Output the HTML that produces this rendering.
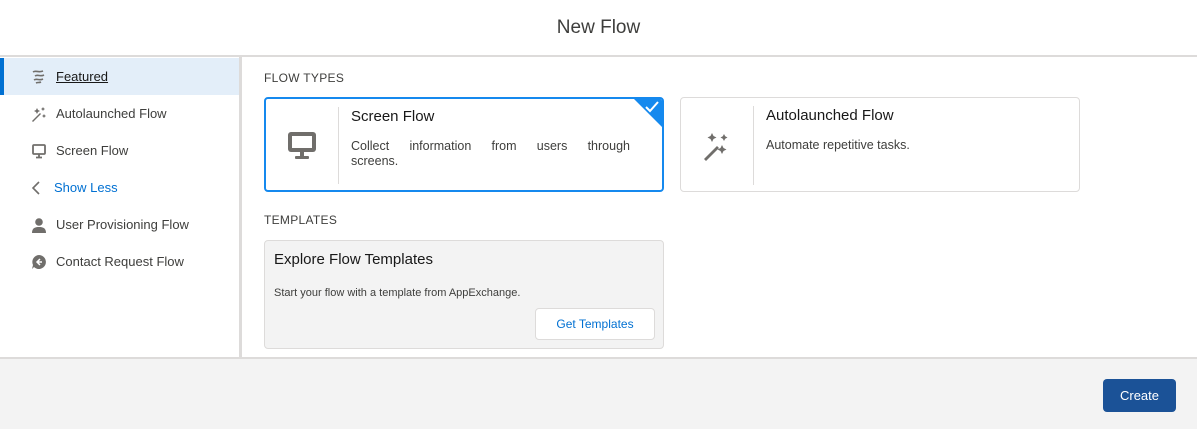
<!DOCTYPE html>
<html><head><meta charset="utf-8"><style>
*{box-sizing:border-box;margin:0;padding:0}
body{width:1197px;height:440px;background:#fff;font-family:"Liberation Sans",sans-serif;color:#181818;position:relative;overflow:hidden}
.hdr{position:absolute;left:0;top:0;width:1197px;height:57px;border-bottom:2px solid #dddbda;text-align:center;font-size:19px;line-height:56px;color:#3e3e3c}
.side{position:absolute;left:0;top:57px;width:242px;height:300px;border-right:3px solid #dddbda}
.item{position:absolute;left:0;width:239px;height:37px;font-size:13px;line-height:37px;padding-left:56px;color:#3e3e3c}
.item svg{position:absolute;left:31px;top:11px}
.sel{background:#e3eef9;border-left:4px solid #0070d2}
.sel span{text-decoration:underline;color:#181818}
.lbl{position:absolute;font-size:12px;color:#3e3e3c;letter-spacing:.3px}
.card{position:absolute;background:#fff;border:1px solid #dddbda;border-radius:4px}
.card .div{position:absolute;left:72px;top:8px;bottom:6px;width:1px;background:#dddbda}
.card h3{position:absolute;left:85px;top:9px;font-weight:normal;font-size:15px;color:#181818}
.card p{position:absolute;left:85px;top:40px;font-size:12.5px;line-height:15px;color:#3e3e3c}
.tpl{position:absolute;left:264px;top:240px;width:400px;height:109px;background:#f3f3f3;border:1px solid #dddbda;border-radius:4px}
.ftr{position:absolute;left:0;top:357px;width:1197px;height:72px;background:#f3f3f3;border-top:2px solid #dddbda}
.btn{position:absolute;border-radius:4px;font-size:13px;text-align:center}
</style></head><body>
<div class="hdr">New Flow</div>
<div class="side">
<div class="item sel" style="top:1px;padding-left:52px"><svg style="left:27px" width="16" height="16" viewBox="0 0 16 16" fill="none" stroke="#706e6b" stroke-width="1.6"><path d="M2 3c3-2 5 1 10-1M4 7c3-2 5 1 9-1M3 11c3-2 5 1 9-1M5 14c2-1 3 0 5-1"/></svg><span>Featured</span></div>
<div class="item" style="top:38px"><svg width="16" height="16" viewBox="0 0 16 16" fill="#706e6b"><path d="M1 15l8-8 1 1-8 8z"/><path d="M6 2l1 2 2 1-2 1-1 2-1-2-2-1 2-1z"/><path d="M12 1l.7 1.3L14 3l-1.3.7L12 5l-.7-1.3L10 3l1.3-.7zM13 8l.7 1.3 1.3.7-1.3.7L13 12l-.7-1.3L11 10l1.3-.7z"/></svg>Autolaunched Flow</div>
<div class="item" style="top:75px"><svg width="16" height="16" viewBox="0 0 16 16" fill="none" stroke="#706e6b" stroke-width="1.8"><rect x="2" y="2" width="12" height="9" rx="1"/><path d="M8 11v3M5 14.5h6"/></svg>Screen Flow</div>
<div class="item" style="top:112px;color:#0070d2;padding-left:54px"><svg width="16" height="16" viewBox="0 0 16 16" fill="none" stroke="#706e6b" stroke-width="1.6" style="left:29px"><path d="M10 2L4 8l6 6"/></svg>Show Less</div>
<div class="item" style="top:149px"><svg width="16" height="16" viewBox="0 0 16 16" fill="#706e6b"><circle cx="8" cy="5" r="3.8"/><path d="M1 16c0-5 3-6 7-6s7 1 7 6z"/></svg>User Provisioning Flow</div>
<div class="item" style="top:186px"><svg width="16" height="16" viewBox="0 0 16 16" fill="#706e6b"><path d="M8 1a7 7 0 1 1-5 12l-2 2 1-4A7 7 0 0 1 8 1z"/><path d="M9 5L6 8l3 3M6 8h5" stroke="#fff" stroke-width="1.5" fill="none"/></svg>Contact Request Flow</div>
</div>
<div class="lbl" style="left:264px;top:71px">FLOW TYPES</div>
<div class="card" style="left:264px;top:97px;width:400px;height:95px;border:2px solid #1589ee;overflow:hidden">
<svg style="position:absolute;left:20px;top:30px" width="32" height="32" viewBox="0 0 32 32" fill="#706e6b"><rect x="2" y="3" width="28" height="20" rx="3"/><rect x="6" y="7" width="20" height="12" fill="#fff"/><rect x="14" y="23" width="4" height="4"/><rect x="9" y="27" width="14" height="3" rx="1"/></svg>
<div class="div"></div><h3>Screen Flow</h3>
<p style="width:279px;font-size:12.5px"><span style="display:flex;justify-content:space-between"><span>Collect</span><span>information</span><span>from</span><span>users</span><span>through</span></span>screens.</p>
<div style="position:absolute;right:-1px;top:-1px;width:0;height:0;border-top:30px solid #1589ee;border-left:30px solid transparent"></div>
<svg style="position:absolute;right:3px;top:2px" width="14" height="12" viewBox="0 0 14 12" fill="none" stroke="#fff" stroke-width="2"><path d="M1 6l4 4 8-9"/></svg>
</div>
<div class="card" style="left:680px;top:97px;width:400px;height:95px">
<svg style="position:absolute;left:21px;top:33px" width="32" height="32" viewBox="0 0 32 32" fill="#706e6b"><path d="M2 28l13-13 2 2-13 13z"/><path d="M10 2l1.5 3 3 1.5-3 1.5L10 11l-1.5-3-3-1.5 3-1.5z"/><path d="M22 3l1.2 2.3 2.3 1.2-2.3 1.2L22 10l-1.2-2.3-2.3-1.2 2.3-1.2zM20 14l1.5 3 3 1.5-3 1.5-1.5 3-1.5-3-3-1.5 3-1.5z"/></svg>
<div class="div"></div><h3>Autolaunched Flow</h3><p>Automate repetitive tasks.</p></div>
<div class="lbl" style="left:264px;top:213px">TEMPLATES</div>
<div class="tpl">
<div style="position:absolute;left:9px;top:10px;font-size:15px;color:#181818">Explore Flow Templates</div>
<div style="position:absolute;left:9px;top:46px;font-size:11px;color:#3e3e3c">Start your flow with a template from AppExchange.</div>
<div class="btn" style="left:270px;top:67px;width:120px;height:32px;background:#fff;border:1px solid #dddbda;color:#0070d2;line-height:30px;font-size:12px">Get Templates</div>
</div>
<div class="ftr"><div class="btn" style="left:1103px;top:20px;width:73px;height:33px;background:#1b5297;color:#fff;line-height:33px">Create</div></div>
</body></html>
